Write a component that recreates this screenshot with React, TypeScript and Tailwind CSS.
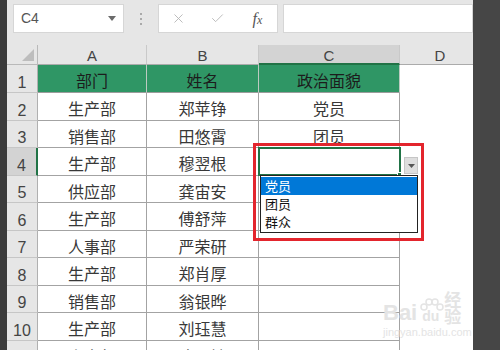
import { X, Check } from 'lucide-react';

const rows = [
  ['部门', '姓名', '政治面貌'],
  ['生产部', '郑苹铮', '党员'],
  ['销售部', '田悠霄', '团员'],
  ['生产部', '穆翌根', ''],
  ['供应部', '龚宙安', ''],
  ['生产部', '傅舒萍', ''],
  ['人事部', '严荣研', ''],
  ['生产部', '郑肖厚', ''],
  ['销售部', '翁银晔', ''],
  ['生产部', '刘珏慧', ''],
  ['人事部', '陈丽敏', ''],
];

const heights = [
  'h-[28px]', 'h-[28px]', 'h-[27px]', 'h-[28px]', 'h-[27px]', 'h-[28px]',
  'h-[27px]', 'h-[28px]', 'h-[27px]', 'h-[28px]', 'h-[28px]',
];

const cjk = "font-['Noto_Sans_CJK_SC',sans-serif]";
const latin = "font-['Liberation_Sans',sans-serif]";

const Toolbar = () => (
  <div className="h-[45px] shrink-0 flex items-start pt-[4px]">
    {/* name box */}
    <div className="ml-[6px] w-[111px] h-[29px] bg-white border border-[#d6d6d6] flex items-center justify-between pl-[7px] pr-[7px]">
      <span className={`${latin} text-[14px] text-[#555]`}>C4</span>
      <svg width="8" height="5" viewBox="0 0 8 5">
        <path d="M0 0 L8 0 L4 5 Z" fill="#6b6b6b" />
      </svg>
    </div>
    <div className="w-[34px] h-[29px] flex flex-col items-center justify-center gap-[3px]">
      <span className="w-[2px] h-[2px] bg-[#aaaaaa]" />
      <span className="w-[2px] h-[2px] bg-[#aaaaaa]" />
      <span className="w-[2px] h-[2px] bg-[#aaaaaa]" />
    </div>
    {/* cancel / enter / fx */}
    <div className="w-[120px] h-[29px] bg-white border border-[#d6d6d6] grid grid-cols-3 items-center justify-items-center">
      <X size={15} strokeWidth={1.4} color="#b3b3b3" />
      <Check size={15} strokeWidth={1.4} color="#b3b3b3" />
      <span className="italic font-['Liberation_Serif',serif] text-[16px] text-[#555] leading-none">
        f<span className="text-[12px]">x</span>
      </span>
    </div>
    <div className="ml-[5px] flex-1 h-[29px] bg-white border border-[#d6d6d6]" />
  </div>
);

const ColumnHeaders = () => (
  <div className={`flex h-[20px] shrink-0 ${latin} text-[15px] leading-none text-[#444]`}>
    <div className="w-[31px] shrink-0 border-r border-b border-[#b9b9b9] flex items-end justify-end pr-[3px] pb-[3px]">
      <svg width="12" height="12" viewBox="0 0 12 12">
        <path d="M12 0 L12 12 L0 12 Z" fill="#bdbdbd" />
      </svg>
    </div>
    <div className="w-[109px] shrink-0 border-r border-r-[#c9c9c9] border-b border-b-[#ababab] flex items-end justify-center pb-[1px]">A</div>
    <div className="w-[112px] shrink-0 border-r border-r-[#c9c9c9] border-b border-b-[#ababab] flex items-end justify-center pb-[1px]">B</div>
    <div className="w-[141px] shrink-0 bg-[#d3d3d3] border-r border-r-[#c9c9c9] border-b-2 border-b-[#217346] flex items-end justify-center">C</div>
    <div className="w-[80px] shrink-0 border-b border-b-[#ababab] flex items-end justify-center pb-[1px]">D</div>
  </div>
);

const Row = ({ i, cells }: { i: number; cells: string[] }) => {
  const head = i === 0;
  const selected = i === 3;
  const cell = head
    ? 'bg-[#2f9665] text-[#1c1c1c] border-r border-r-[#bccac1] border-b border-b-[#9c9c9c]'
    : 'bg-white text-[#383838] border-r border-b border-[#a3a3a3]';
  return (
    <div className={`flex shrink-0 ${heights[i]}`}>
      <div
        className={`w-[31px] shrink-0 border-b border-b-[#c6c6c6] flex items-end justify-center ${latin} text-[16px] leading-none text-[#444] ${
          selected ? 'bg-[#d3d3d3] border-r-2 border-r-[#217346]' : 'bg-[#e6e6e6] border-r border-r-[#b0b0b0]'
        }`}
      >
        <span className="pb-[1px]">{i + 1}</span>
      </div>
      <div className={`w-[109px] shrink-0 flex items-center justify-center pt-[3px] ${cjk} text-[16px] ${cell}`}>{cells[0]}</div>
      <div className={`w-[112px] shrink-0 flex items-center justify-center pt-[3px] ${cjk} text-[16px] ${cell}`}>{cells[1]}</div>
      <div className={`w-[141px] shrink-0 flex items-center justify-center pt-[3px] ${cjk} text-[16px] ${cell}`}>{cells[2]}</div>
      <div className="w-[80px] shrink-0 bg-white" />
    </div>
  );
};

const Dropdown = () => (
  <>
    {/* active cell C4 */}
    <div className="absolute left-[258px] top-[147px] w-[143px] h-[29px] border-2 border-[#217346]" />
    <div className="absolute left-[397px] top-[172px] w-[5px] h-[5px] bg-[#217346] border border-white" />
    {/* in-cell dropdown button */}
    <div className="absolute left-[404px] top-[157px] w-[14px] h-[17px] bg-[#dedede] border border-[#c6c6c6] flex items-center justify-center">
      <svg width="7" height="4" viewBox="0 0 7 4">
        <path d="M0 0 L7 0 L3.5 4 Z" fill="#555" />
      </svg>
    </div>
    {/* list */}
    <div className={`absolute left-[260px] top-[175px] w-[158px] h-[58px] bg-white border border-[#222] pt-[1px] ${cjk} text-[13px]`}>
      <div className="h-[18px] bg-[#0078d7] text-white flex items-center pl-[4px]">党员</div>
      <div className="h-[18px] text-[#111] flex items-center pl-[4px]">团员</div>
      <div className="h-[18px] text-[#111] flex items-center pl-[4px]">群众</div>
    </div>
    {/* red annotation box */}
    <div className="absolute left-[253px] top-[143px] w-[171px] h-[98px] border-[3px] border-[#e3252d]" />
  </>
);

const Watermark = () => (
  <div className="absolute left-[383px] top-[298px] w-[92px] flex flex-col items-start text-[#e4e4e4] pointer-events-none">
    <div className="flex items-end h-[26px]">
      <span className={`${latin} font-bold text-[22px] leading-none`}>Bai</span>
      <span className="relative w-[30px] h-[26px] flex items-end justify-center">
        <svg className="absolute left-[3px] top-0" width="24" height="14" viewBox="0 0 24 14">
          <circle cx="4" cy="9" r="3" fill="none" stroke="#e4e4e4" strokeWidth="1.5" />
          <circle cx="9" cy="4" r="3" fill="none" stroke="#e4e4e4" strokeWidth="1.5" />
          <circle cx="15" cy="4" r="3" fill="none" stroke="#e4e4e4" strokeWidth="1.5" />
          <circle cx="20" cy="9" r="3" fill="none" stroke="#e4e4e4" strokeWidth="1.5" />
        </svg>
        <span className={`${latin} font-bold text-[14px] leading-none pb-[1px]`}>du</span>
      </span>
      <span className={`${cjk} font-bold text-[17px] leading-none`}>经验</span>
    </div>
    <span className={`${latin} text-[11px] leading-none mt-[3px]`}>jingyan.baidu.com</span>
  </div>
);

export default function App() {
  return (
    <div className="relative w-[500px] h-[350px] flex overflow-hidden bg-white">
      <div className="w-[7px] shrink-0 bg-[#3b3b3b]" />
      <div className="w-[466px] shrink-0 flex flex-col overflow-hidden bg-[#e6e6e6]">
        <Toolbar />
        <ColumnHeaders />
        {rows.map((cells, i) => (
          <Row key={i} i={i} cells={cells} />
        ))}
      </div>
      <div className="w-[27px] shrink-0 bg-[#464646]" />
      <Dropdown />
      <Watermark />
    </div>
  );
}
